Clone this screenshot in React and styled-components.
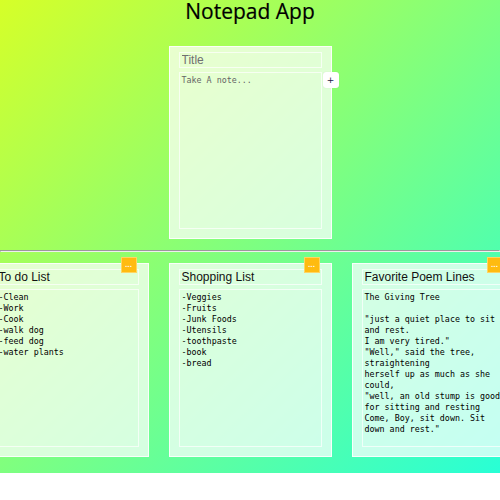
import React from "react";
import styled, { createGlobalStyle } from "styled-components";

const Global = createGlobalStyle`
  * { box-sizing: border-box; }
  html, body { margin: 0; padding: 0; background: #fff; }
  body { font-family: "Liberation Sans", Arial, sans-serif; }
`;

const Page = styled.div`
  background: linear-gradient(to bottom right, #d6ff28, #28ffd6);
  padding-bottom: 16px;
`;

const Heading = styled.h1`
  margin: 0;
  padding-top: 1px;
  text-align: center;
  font-family: "Open Sans", "Noto Sans", sans-serif;
  font-weight: 400;
  font-size: 21px;
  line-height: 21px;
  color: #000;
  -webkit-text-stroke: 0.2px #000;
`;

const Card = styled.div`
  position: relative;
  flex: 0 0 163px;
  width: 163px;
  height: ${(p) => p.$h}px;
  margin: ${(p) => (p.$top ? "24px auto 0" : "0")};
  background: rgba(255, 255, 255, 0.72);
  border: 1px solid rgba(255, 255, 255, 0.85);
  padding: 5px 9px 9px;
  display: flex;
  flex-direction: column;
  gap: 4px;
`;

const TitleInput = styled.input`
  height: 16px;
  width: 100%;
  margin: 0;
  padding: 0 2px;
  border: 1px solid rgba(255, 255, 255, 0.7);
  background: transparent;
  font-family: "Liberation Sans", Arial, sans-serif;
  font-size: 12px;
  color: #111;
  outline: none;
  &::placeholder { color: #707070; }
`;

const NoteArea = styled.textarea`
  flex: 1;
  width: 100%;
  margin: 0;
  padding: 2px;
  border: 1px solid rgba(255, 255, 255, 0.7);
  background: transparent;
  font-family: "DejaVu Sans Mono", "Liberation Mono", monospace;
  font-size: 8.35px;
  line-height: 11px;
  color: #000;
  resize: none;
  overflow: hidden;
  outline: none;
  &::placeholder { color: #666; }
`;

const AddButton = styled.button`
  position: absolute;
  top: 25px;
  right: -8px;
  width: 16px;
  height: 16px;
  padding: 0;
  border: none;
  border-radius: 3px;
  background: #fff;
  color: #1a1a4a;
  font-family: "DejaVu Sans", sans-serif;
  font-size: 9px;
  line-height: 16px;
  text-align: center;
  box-shadow: 0 0 1px rgba(0,0,0,0.15);
`;

const MenuButton = styled.button`
  position: absolute;
  top: -7px;
  right: 11px;
  width: 16px;
  height: 16px;
  padding: 0;
  border: 1px solid rgba(255, 220, 120, 0.8);
  background: #ffbb10;
  color: #fff;
  font-family: "DejaVu Sans", sans-serif;
  font-weight: 700;
  font-size: 6px;
  line-height: 12px;
  text-align: center;
  letter-spacing: 0;
`;

const Divider = styled.hr`
  margin: 11px 0 0;
  border: 1px inset;
  color: gray;
`;

const Row = styled.div`
  display: flex;
  justify-content: center;
  gap: 20px;
  padding-top: 11px;
  overflow: hidden;
`;

const notes = [
  { title: "To do List", body: "-Clean\n-Work\n-Cook\n-walk dog\n-feed dog\n-water plants" },
  { title: "Shopping List", body: "-Veggies\n-Fruits\n-Junk Foods\n-Utensils\n-toothpaste\n-book\n-bread" },
  {
    title: "Favorite Poem Lines",
    body:
      'The Giving Tree\n\n"just a quiet place to sit and rest.\nI am very tired."\n"Well," said the tree, straightening\nherself up as much as she could,\n"well, an old stump is good for sitting and resting\nCome, Boy, sit down. Sit down and rest."',
  },
];

export default function App() {
  return (
    <>
      <Global />
      <Page>
        <Heading>Notepad App</Heading>
        <Card $top $h={193}>
          <TitleInput placeholder="Title" />
          <NoteArea placeholder="Take A note..." />
          <AddButton>+</AddButton>
        </Card>
        <Divider />
        <Row>
          {notes.map((n) => (
            <Card key={n.title} $h={194}>
              <TitleInput defaultValue={n.title} />
              <NoteArea defaultValue={n.body} />
              <MenuButton>...</MenuButton>
            </Card>
          ))}
        </Row>
      </Page>
    </>
  );
}
